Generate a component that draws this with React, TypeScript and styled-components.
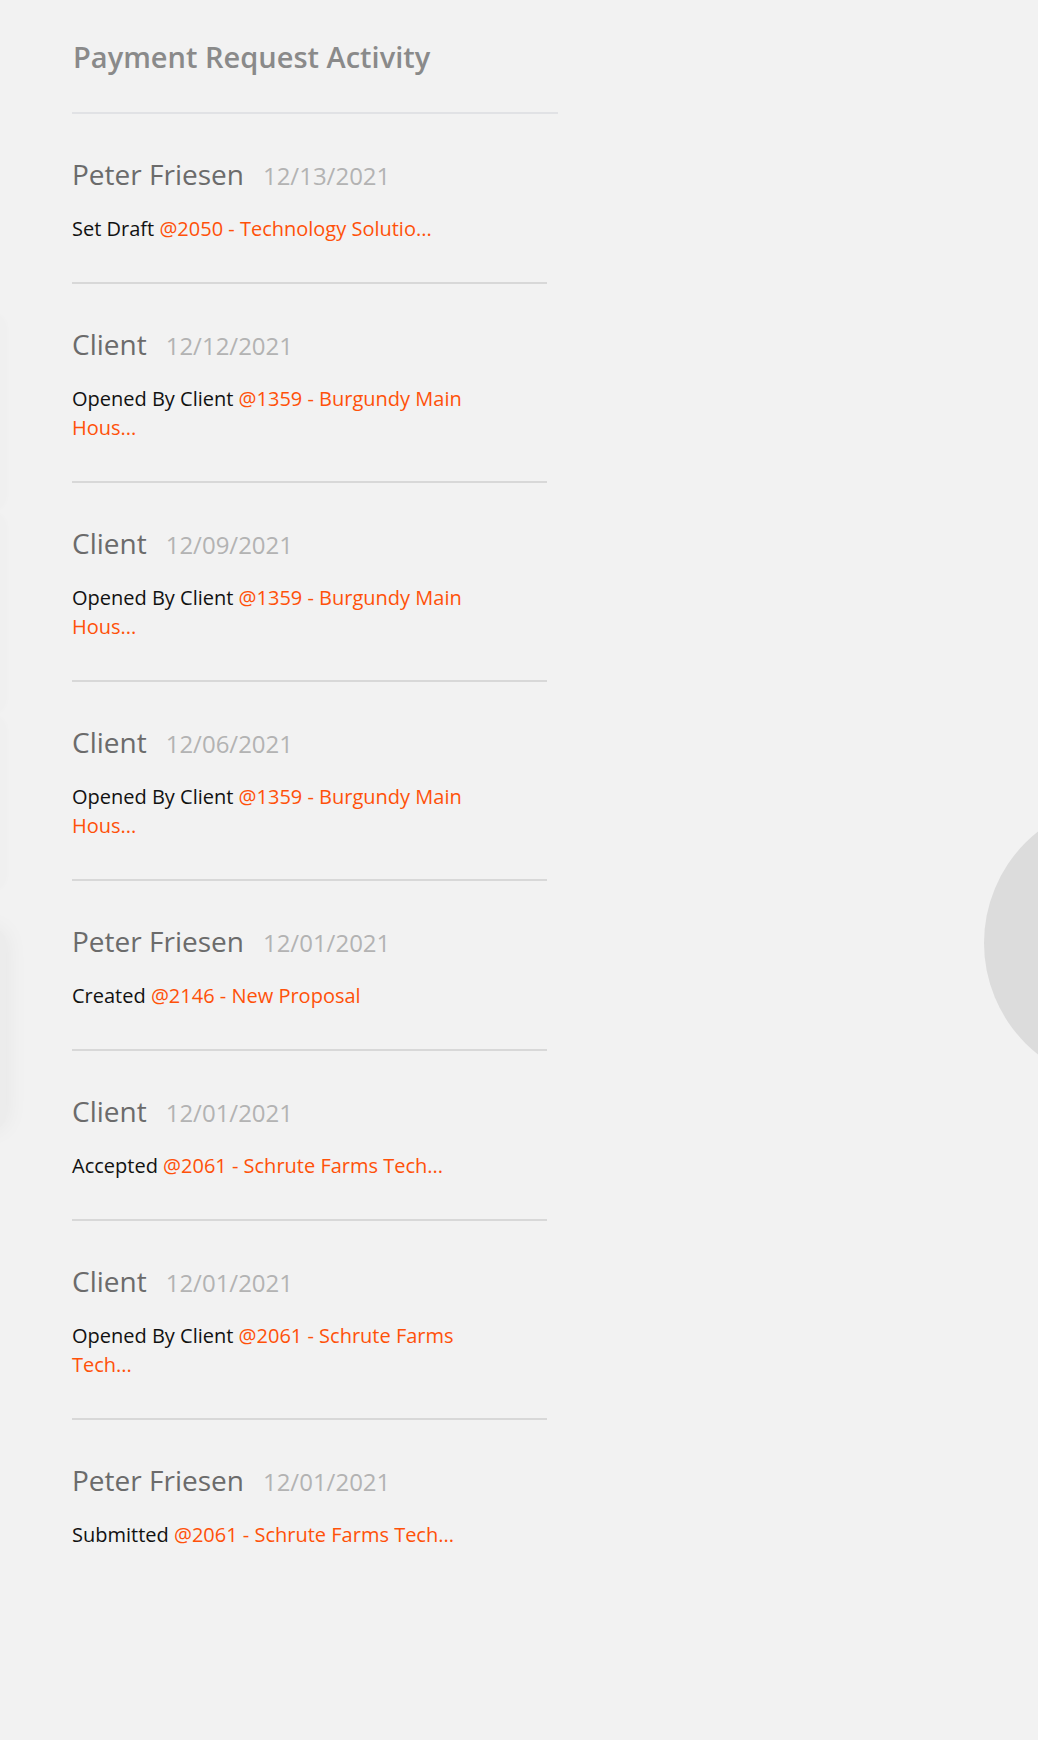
import React from 'react';
import styled, { createGlobalStyle } from 'styled-components';

const GlobalStyle = createGlobalStyle`
  html, body {
    margin: 0;
    padding: 0;
    background: #f2f2f2;
  }
  body {
    font-family: 'Open Sans', 'Noto Sans', sans-serif;
    overflow: hidden;
  }
`;

const Page = styled.div`
  position: relative;
  display: flex;
  flex-direction: column;
  min-height: 1740px;
  padding: 37px 0 0 72px;
  box-sizing: border-box;
  overflow: hidden;
`;

const Header = styled.div`
  width: 485px;
  padding: 0 0 35px 1px;
  border-bottom: 2px solid #e1e2e5;
`;

const Title = styled.h2`
  margin: 0;
  font-size: 29px;
  line-height: 40px;
  font-weight: 600;
  color: #8a8a8a;
`;

const List = styled.ul`
  display: flex;
  flex-direction: column;
  list-style: none;
  margin: 0;
  padding: 0;
  width: 475px;
`;

const Item = styled.li`
  display: flex;
  flex-direction: column;
  gap: 22px;
  padding: 42px 0 39px;
  border-bottom: 2px solid #d8d8d8;

  &:last-child {
    border-bottom: none;
  }
`;

const Meta = styled.div`
  display: flex;
  align-items: baseline;
  gap: 19px;
  height: 36px;
  line-height: 36px;
`;

const Author = styled.span`
  font-size: 28px;
  color: #6b6b6b;
`;

const Stamp = styled.span`
  font-size: 24px;
  color: #b3b3b3;
`;

const Description = styled.p`
  margin: 0;
  max-width: 405px;
  font-size: 20px;
  line-height: 29px;
  color: #111;
`;

const Ref = styled.a`
  color: #ff5109;
  text-decoration: none;
`;

/* decorative background: round shape peeking in from the right */
const Bubble = styled.div`
  position: absolute;
  left: 984px;
  top: 801px;
  width: 284px;
  height: 284px;
  border-radius: 50%;
  background: #dcdcdc;
`;

/* faint cards of the page behind, peeking in from the left edge */
const EdgeStack = styled.div`
  position: absolute;
  left: -40px;
  top: 314px;
  display: flex;
  flex-direction: column;
  gap: 3px;
`;

const EdgeCard = styled.div<{ $height: number; $dark?: boolean }>`
  width: 46px;
  height: ${p => p.$height}px;
  border-radius: 14px;
  background: ${p => (p.$dark ? '#ececec' : '#f0f0f0')};
  box-shadow: 0 0 ${p => (p.$dark ? 24 : 6)}px rgba(0, 0, 0, ${p => (p.$dark ? 0.06 : 0.02)});
  margin-top: ${p => (p.$dark ? 36 : 0)}px;
`;

type Activity = {
  author: string;
  date: string;
  action: string;
  target: string;
};

const activities: Activity[] = [
  { author: 'Peter Friesen', date: '12/13/2021', action: 'Set Draft', target: '@2050 - Technology Solutio...' },
  { author: 'Client', date: '12/12/2021', action: 'Opened By Client', target: '@1359 - Burgundy Main Hous...' },
  { author: 'Client', date: '12/09/2021', action: 'Opened By Client', target: '@1359 - Burgundy Main Hous...' },
  { author: 'Client', date: '12/06/2021', action: 'Opened By Client', target: '@1359 - Burgundy Main Hous...' },
  { author: 'Peter Friesen', date: '12/01/2021', action: 'Created', target: '@2146 - New Proposal' },
  { author: 'Client', date: '12/01/2021', action: 'Accepted', target: '@2061 - Schrute Farms Tech...' },
  { author: 'Client', date: '12/01/2021', action: 'Opened By Client', target: '@2061 - Schrute Farms Tech...' },
  { author: 'Peter Friesen', date: '12/01/2021', action: 'Submitted', target: '@2061 - Schrute Farms Tech...' },
];

const App: React.FC = () => {
  return (
    <Page>
      <GlobalStyle />
      <EdgeStack>
        <EdgeCard $height={196} />
        <EdgeCard $height={200} />
        <EdgeCard $height={174} />
        <EdgeCard $height={200} $dark />
      </EdgeStack>
      <Bubble />

      <Header>
        <Title>Payment Request Activity</Title>
      </Header>

      <List>
        {activities.map((a, i) => (
          <Item key={i}>
            <Meta>
              <Author>{a.author}</Author>
              <Stamp>{a.date}</Stamp>
            </Meta>
            <Description>
              {a.action} <Ref href="#">{a.target}</Ref>
            </Description>
          </Item>
        ))}
      </List>
    </Page>
  );
};

export default App;
